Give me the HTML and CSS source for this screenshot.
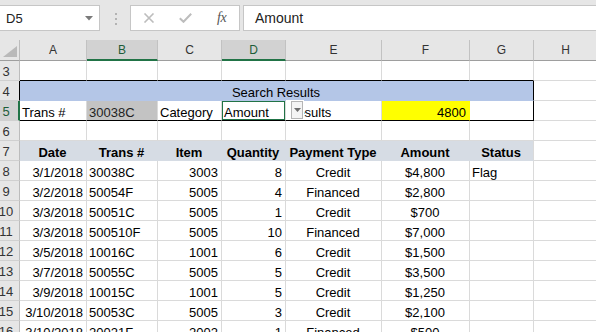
FILE: index.html
```html
<!DOCTYPE html>
<html>
<head>
<meta charset="utf-8">
<link rel="stylesheet" href="styles.css">
</head>
<body>
<div class="app">
  <div class="toolbar">
    <div class="namebox">
      <span class="name">D5</span>
      <svg class="nb-arrow" width="8" height="5" viewBox="0 0 8 5"><path d="M0 0H8L4 4.5Z" fill="#7a7a7a"/></svg>
    </div>
    <svg class="grip" width="4" height="12" viewBox="0 0 4 12"><rect x="1" y="0" width="2" height="2" fill="#b3b3b3"/><rect x="1" y="5" width="2" height="2" fill="#b3b3b3"/><rect x="1" y="10" width="2" height="2" fill="#b3b3b3"/></svg>
    <div class="iconbox">
      <svg width="12" height="10" viewBox="0 0 12 10"><path d="M1.5 0.5L10.5 9.5M10.5 0.5L1.5 9.5" stroke="#bdbdbd" stroke-width="1.6" fill="none"/></svg>
      <svg width="13" height="10" viewBox="0 0 13 10"><path d="M0.8 5.2L4.5 8.8L12.2 0.8" stroke="#bdbdbd" stroke-width="2" fill="none"/></svg>
      <span class="fx">fx</span>
    </div>
    <div class="formula">Amount</div>
  </div>

  <div class="sheet">
    <!-- column headers -->
    <div class="corner"><svg width="14" height="11" viewBox="0 0 14 11"><path d="M14 0V11H0Z" fill="#b9b9b9"/></svg></div>
    <div class="ch">A</div>
    <div class="ch sel">B</div>
    <div class="ch">C</div>
    <div class="ch sel">D</div>
    <div class="ch">E</div>
    <div class="ch">F</div>
    <div class="ch">G</div>
    <div class="ch">H</div>

    <!-- row 3 -->
    <div class="rh"><span>3</span></div>
    <div class="c bb-k"></div><div class="c bb-k"></div><div class="c bb-k"></div><div class="c bb-k"></div><div class="c bb-k"></div><div class="c bb-k"></div><div class="c bb-k"></div><div class="c"></div>

    <!-- row 4 -->
    <div class="rh rh-k"><span>4</span></div>
    <div class="c title">Search Results</div>
    <div class="c"></div>

    <!-- row 5 -->
    <div class="rh rh-sel"><span>5</span></div>
    <div class="c bb-k">Trans #</div>
    <div class="c bb-k grayfill">30038C</div>
    <div class="c bb-k">Category</div>
    <div class="c bb-k active"><div class="activebox">Amount</div></div>
    <div class="c bb-k dd-host">Results<div class="dropdown"><div class="dd-btn"><svg width="7" height="4" viewBox="0 0 7 4"><path d="M0 0H7L3.5 4Z" fill="#6d6d6d"/></svg></div></div></div>
    <div class="c bb-k yellow r">4800</div>
    <div class="c bb-k br-k"></div>
    <div class="c"></div>

    <!-- row 6 -->
    <div class="rh"><span>6</span></div>
    <div class="c"></div><div class="c"></div><div class="c"></div><div class="c"></div><div class="c"></div><div class="c"></div><div class="c"></div><div class="c"></div>

    <!-- row 7 -->
    <div class="rh"><span>7</span></div>
    <div class="c hd">Date</div>
    <div class="c hd">Trans #</div>
    <div class="c hd">Item</div>
    <div class="c hd">Quantity</div>
    <div class="c hd">Payment Type</div>
    <div class="c hd">Amount</div>
    <div class="c hd last">Status</div>
    <div class="c"></div>

    <!-- row 8 -->
    <div class="rh"><span>8</span></div>
    <div class="c r">3/1/2018</div><div class="c">30038C</div><div class="c r">3003</div><div class="c r">8</div><div class="c m">Credit</div><div class="c m">$4,800</div><div class="c">Flag</div><div class="c"></div>

    <div class="rh"><span>9</span></div>
    <div class="c r">3/2/2018</div><div class="c">50054F</div><div class="c r">5005</div><div class="c r">4</div><div class="c m">Financed</div><div class="c m">$2,800</div><div class="c"></div><div class="c"></div>

    <div class="rh"><span>10</span></div>
    <div class="c r">3/3/2018</div><div class="c">50051C</div><div class="c r">5005</div><div class="c r">1</div><div class="c m">Credit</div><div class="c m">$700</div><div class="c"></div><div class="c"></div>

    <div class="rh"><span>11</span></div>
    <div class="c r">3/3/2018</div><div class="c">500510F</div><div class="c r">5005</div><div class="c r">10</div><div class="c m">Financed</div><div class="c m">$7,000</div><div class="c"></div><div class="c"></div>

    <div class="rh"><span>12</span></div>
    <div class="c r">3/5/2018</div><div class="c">10016C</div><div class="c r">1001</div><div class="c r">6</div><div class="c m">Credit</div><div class="c m">$1,500</div><div class="c"></div><div class="c"></div>

    <div class="rh"><span>13</span></div>
    <div class="c r">3/7/2018</div><div class="c">50055C</div><div class="c r">5005</div><div class="c r">5</div><div class="c m">Credit</div><div class="c m">$3,500</div><div class="c"></div><div class="c"></div>

    <div class="rh"><span>14</span></div>
    <div class="c r">3/9/2018</div><div class="c">10015C</div><div class="c r">1001</div><div class="c r">5</div><div class="c m">Credit</div><div class="c m">$1,250</div><div class="c"></div><div class="c"></div>

    <div class="rh"><span>15</span></div>
    <div class="c r">3/10/2018</div><div class="c">50053C</div><div class="c r">5005</div><div class="c r">3</div><div class="c m">Credit</div><div class="c m">$2,100</div><div class="c"></div><div class="c"></div>

    <div class="rh"><span>16</span></div>
    <div class="c r">3/10/2018</div><div class="c">20021F</div><div class="c r">2002</div><div class="c r">1</div><div class="c m">Financed</div><div class="c m">$500</div><div class="c"></div><div class="c"></div>
  </div>
</div>
</body>
</html>
```

FILE: styles.css
```css
* { box-sizing: border-box; }
html, body { margin: 0; padding: 0; }
body {
  width: 596px;
  height: 332px;
  overflow: hidden;
  background: #ffffff;
  font-family: "Liberation Sans", Arial, sans-serif;
  color: #000;
}
.app { width: 596px; height: 332px; overflow: hidden; }

/* ---------- toolbar ---------- */
.toolbar {
  height: 40px;
  background: #e6e6e6;
  display: flex;
  align-items: flex-start;
  padding-top: 5px;
}
.namebox {
  margin-left: -1px;
  width: 101px;
  height: 26px;
  background: #fff;
  border: 1px solid #c6c6c6;
  display: flex;
  align-items: center;
  padding-left: 6px;
  padding-right: 6px;
  font-size: 13px;
  color: #222;
}
.namebox .name { flex: 1; }
.nb-arrow { display: block; margin-top: 1px; }
.grip { display: block; margin: 8px 0 0 14px; }
.iconbox {
  margin-left: 12px;
  width: 110px;
  height: 26px;
  background: #fff;
  border: 1px solid #c6c6c6;
  display: flex;
  align-items: center;
  padding-left: 12px;
}
.iconbox svg { display: block; }
.iconbox svg:nth-child(2) { margin-left: 24px; }
.fx {
  margin-left: 25px;
  font-family: "Liberation Serif", serif;
  font-style: italic;
  font-size: 14px;
  color: #555;
  letter-spacing: -0.5px;
}
.formula {
  margin-left: 3px;
  flex: 1;
  height: 26px;
  background: #fff;
  border: 1px solid #c6c6c6;
  border-right: none;
  padding-left: 11px;
  font-size: 14px;
  line-height: 24px;
  color: #222;
}

/* ---------- sheet grid ---------- */
.sheet {
  display: grid;
  grid-template-columns: 20px 67px 71px 64px 64px 96px 88px 64px 64px;
  grid-template-rows: 21px;
  grid-auto-rows: 20px;
  width: 660px;
}
.corner {
  background: #e6e6e6;
  border-right: 1px solid #bcbcbc;
  border-bottom: 1px solid #9e9e9e;
  padding: 6px 0 0 3px;
}
.corner svg { display: block; }
.ch {
  background: #e6e6e6;
  border-right: 1px solid #c2c2c2;
  border-bottom: 1px solid #9e9e9e;
  text-align: center;
  font-size: 12px;
  line-height: 15px;
  padding-top: 3px;
  color: #333;
}
.ch.sel {
  background: #d2d2d2;
  border-bottom: 2px solid #217346;
  color: #1d5d39;
}
.rh {
  background: #e6e6e6;
  border-right: 1px solid #bcbcbc;
  border-bottom: 1px solid #d0d0d0;
  font-size: 13px;
  line-height: 15px;
  padding-top: 3px;
  color: #333;
  display: flex;
}
.rh span {
  width: 12px;
  display: flex;
  justify-content: center;
  white-space: nowrap;
}
.rh-k { border-right-color: #000; }
.rh-sel {
  background: #d2d2d2;
  border-right: 2px solid #217346;
  color: #1d5d39;
}

.c {
  border-right: 1px solid #dadada;
  border-bottom: 1px solid #dadada;
  font-size: 13px;
  line-height: 15px;
  padding: 4px 3px 0 2px;
  white-space: nowrap;
  overflow: hidden;
}
.r { text-align: right; }
.m { text-align: center; }
.bb-k { border-bottom-color: #000; }
.br-k { border-right-color: #000; }

.title {
  grid-column: span 7;
  background: #b4c6e7;
  border-right-color: #000;
  border-bottom-color: #b4c6e7;
  text-align: center;
}
.grayfill { background: #c3c3c3; color: #222; }
.yellow { background: #ffff00; border-right-color: #ffff00; }

.active { padding: 0; }
.activebox {
  height: 19px;
  border: 1px solid #217346;
  padding: 3px 0 0 1px;
  line-height: 15px;
}

.dd-host { position: relative; overflow: visible; }
.dropdown {
  position: absolute;
  left: 0;
  top: -1px;
  width: 18px;
  height: 20px;
  background: #fff;
  padding: 1px 0 0 5px;
}
.dd-btn {
  width: 12px;
  height: 18px;
  background: #f4f4f4;
  border: 1px solid #b5b5b5;
  display: flex;
  align-items: center;
  justify-content: center;
}
.dd-btn svg { display: block; }

.hd {
  background: #d6dce4;
  border-right-color: #d6dce4;
  border-bottom-color: #d6dce4;
  font-weight: bold;
  text-align: center;
}
.hd.last { border-right-color: #dadada; }
```
